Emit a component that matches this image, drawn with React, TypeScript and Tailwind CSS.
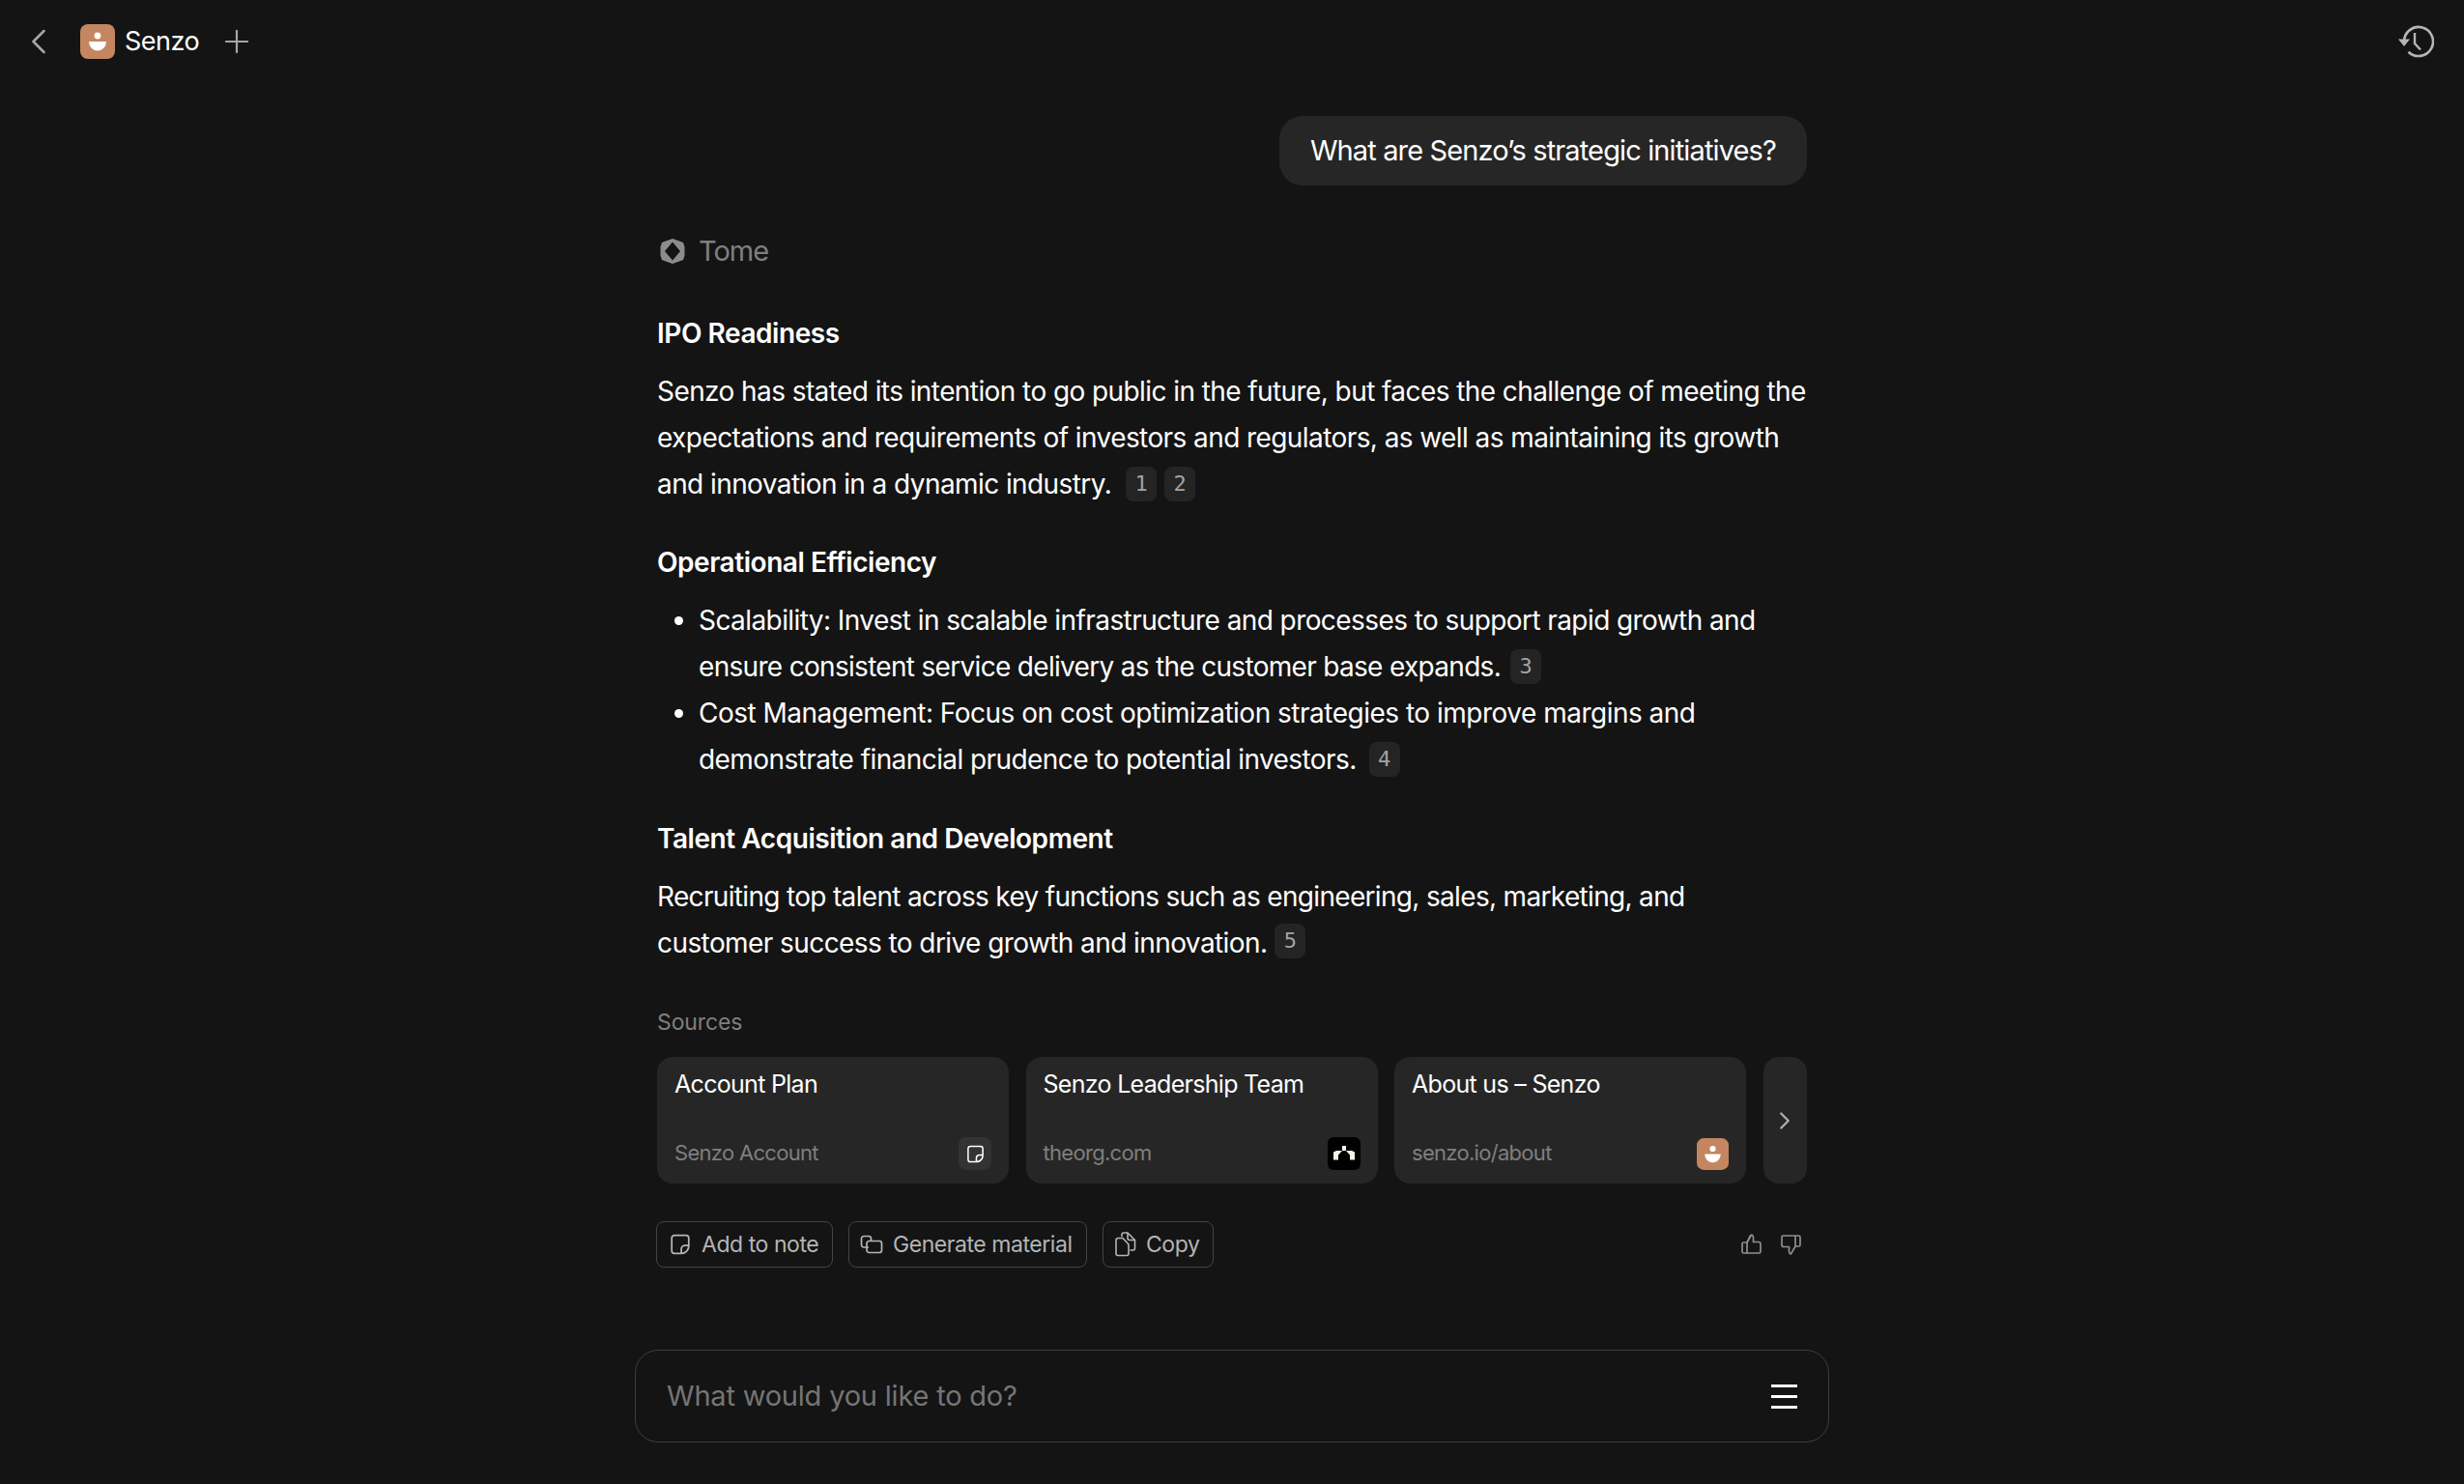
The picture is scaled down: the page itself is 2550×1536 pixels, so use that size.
import { ChevronLeft, ChevronRight, Plus } from 'lucide-react'

function SenzoLogo({ size }: { size: number }) {
  return (
    <svg width={size} height={size} viewBox="0 0 36 36" className="shrink-0">
      <rect width="36" height="36" rx="8" fill="#c38660" />
      <circle cx="18" cy="12" r="3.4" fill="#fff" />
      <path d="M9 18h18a9 9.6 0 0 1-18 0z" fill="#fff" />
    </svg>
  )
}

function NoteIcon({ size, className }: { size: number; className?: string }) {
  return (
    <svg width={size} height={size} viewBox="0 0 20 20" fill="none" stroke="currentColor" strokeWidth="1.6" className={className}>
      <path d="M4.5 1.5h11a2.5 2.5 0 0 1 2.5 2.5v7.5a7 7 0 0 1-7 7H4.5A2.5 2.5 0 0 1 2 16V4a2.5 2.5 0 0 1 2.5-2.5z" />
      <path d="M18 11h-3.5a3.5 3.5 0 0 0-3.5 3.5v4" />
    </svg>
  )
}

function GenerateIcon() {
  return (
    <svg width="24" height="20" viewBox="0 0 24 20" fill="none" stroke="currentColor" strokeWidth="1.7" className="shrink-0">
      <path d="M9 13H4a2.5 2.5 0 0 1-2.5-2.5V4A2.5 2.5 0 0 1 4 1.500h5A2.500 2.500 0 0 1 11.500 4v2" />
      <rect x="7" y="6.500" width="15.500" height="12" rx="2.500" />
    </svg>
  )
}

function CopyIcon() {
  return (
    <svg width="22" height="26" viewBox="0 0 22 26" fill="none" stroke="currentColor" strokeWidth="1.6" className="shrink-0">
      <path d="M7 5V3a2 2 0 0 1 2-2h4l7.500 7.500V17a2 2 0 0 1-2 2h-3" />
      <path d="M13 1v5.500a2 2 0 0 0 2 2h5.500" />
      <path d="M3 6.500h5l6 6.500v9.500a2 2 0 0 1-2 2H3a2 2 0 0 1-2-2v-14a2 2 0 0 1 2-2z" />
    </svg>
  )
}

function Chip({ n, className }: { n: number; className: string }) {
  return (
    <span
      className={`relative inline-flex h-[36px] w-[32px] items-center justify-center rounded-[8px] bg-[#242424] align-middle font-['DejaVu_Sans_Mono',monospace] text-[22px] leading-none tracking-normal text-[#a3a3a3] ${className}`}
    >
      {n}
    </span>
  )
}

function SourceCard({ title, sub, children }: { title: string; sub: string; children: React.ReactNode }) {
  return (
    <div className="flex h-[131px] w-[364px] shrink-0 flex-col justify-between rounded-[16px] bg-[#262626] pb-[14px] pl-[18px] pr-[18px] pt-[12px]">
      <div className="text-[25px] leading-[33px] tracking-[-0.7px] text-white">{title}</div>
      <div className="flex items-center justify-between">
        <span className="pb-[2px] text-[22px] leading-[31px] tracking-[-0.7px] text-[#7f7f7f]">{sub}</span>
        {children}
      </div>
    </div>
  )
}

function ActionButton({ label, icon, className }: { label: string; icon: React.ReactNode; className: string }) {
  return (
    <button className={`flex h-[48px] items-center rounded-[8px] border border-[#444444] text-[23px] tracking-[-0.45px] text-[#b5b5b5] ${className}`}>
      {icon}
      <span>{label}</span>
    </button>
  )
}

const heading = 'text-[28px] font-semibold leading-[48px] tracking-[-0.45px]'
const body = 'text-[28px] leading-[48px] tracking-[-0.58px]'

export default function App() {
  return (
    <div className="flex h-[1536px] w-[2550px] flex-col overflow-hidden bg-[#141414] font-['Inter',sans-serif] text-white">
      {/* Top bar */}
      <div className="flex h-[86px] items-center pl-[18px] pr-[31px]">
        <ChevronLeft size={44} strokeWidth={1.4} className="text-[#a6a6a6]" />
        <div className="ml-[21px]">
          <SenzoLogo size={36} />
        </div>
        <span className="ml-[10px] text-[27px] tracking-[-0.5px] text-white">Senzo</span>
        <Plus size={38} strokeWidth={1.4} className="ml-[20px] text-[#a6a6a6]" />
        <svg width="38" height="36" viewBox="0 0 38 36" fill="none" className="ml-auto text-[#b5b5b5]">
          <path d="M7 18a15 15 0 1 1 4.500 10.700" stroke="currentColor" strokeWidth="2.600" />
          <path d="M1 15.500h12L7 23z" fill="currentColor" />
          <path d="M18 9v11l6 6.500" stroke="currentColor" strokeWidth="2.400" />
        </svg>
      </div>

      {/* Conversation */}
      <div className="mx-auto w-[1190px] pt-[34px]">
        <div className="flex justify-end">
          <div className="rounded-[24px] bg-[#262626] px-[32px] py-[12px] text-[29px] leading-[48px] tracking-[-0.87px]">
            What are Senzo’s strategic initiatives?
          </div>
        </div>

        <div className="mt-[44px] flex h-[48px] items-center pl-[3px]">
          <svg width="26" height="26" viewBox="0 0 26 26" className="shrink-0">
            <path
              fillRule="evenodd"
              fill="#8c8c8c"
              d="M13 0l7 2.500 4 1.500 1.500 4.500 0 9-1.500 4.500-4 1.500-7 2.500-7-2.500-4-1.500-1.500-4.500 0-9 1.500-4.500 4-1.500zM13 3.500L5 13l8 9.500 8-9.500z"
            />
          </svg>
          <span className="ml-[14px] text-[29px] tracking-[-1px] text-[#7f7f7f]">Tome</span>
        </div>

        <div className={`mt-[37px] ${heading}`}>IPO Readiness</div>
        <p className={`mt-[12px] ${body}`}>
          Senzo has stated its intention to go public in the future, but faces the challenge of meeting the
          expectations and requirements of investors and regulators, as well as maintaining its growth and
          innovation in a dynamic industry.
          <Chip n={1} className="-top-[2px] ml-[15px]" />
          <Chip n={2} className="-top-[2px] ml-[8px]" />
        </p>

        <div className={`mt-[33px] ${heading}`}>Operational Efficiency</div>
        <ul className={`mt-[12px] list-disc pl-[43px] ${body}`}>
          <li>
            Scalability: Invest in scalable infrastructure and processes to support rapid growth and{' '}
            <span className="tracking-[-0.69px]">ensure consistent service delivery as the customer base expands.</span>
            <Chip n={3} className="-top-[2px] ml-[10px]" />
          </li>
          <li>
            <span className="tracking-[-0.5px]">Cost Management: Focus on cost optimization strategies to improve margins and</span>{' '}
            demonstrate financial prudence to potential investors.
            <Chip n={4} className="-top-[2px] ml-[13px]" />
          </li>
        </ul>

        <div className={`mt-[34px] ${heading}`}>Talent Acquisition and Development</div>
        <p className={`mt-[12px] ${body}`}>
          <span className="tracking-[-0.67px]">Recruiting top talent across key functions such as engineering, sales, marketing, and</span>{' '}
          customer success to drive growth and innovation.
          <Chip n={5} className="-top-[4px] ml-[8px]" />
        </p>

        {/* Sources */}
        <div className="mt-[40px] text-[23px] leading-[36px] tracking-[-0.1px] text-[#7f7f7f]">Sources</div>
        <div className="mt-[18px] flex gap-[17.5px]">
          <SourceCard title="Account Plan" sub="Senzo Account">
            <div className="flex h-[34px] w-[34px] items-center justify-center rounded-[8px] bg-[#333333] text-white">
              <NoteIcon size={19} />
            </div>
          </SourceCard>
          <SourceCard title="Senzo Leadership Team" sub="theorg.com">
            <svg width="34" height="34" viewBox="0 0 34 34" className="shrink-0">
              <rect width="34" height="34" rx="6" fill="#000" />
              <path d="M15 9h4v5h-4z M6 15.500l3-1.500h6l-4 4.500v5H6z M28 15.500l-3-1.500h-6l4 4.500v5h5z" fill="#f4f1e8" />
            </svg>
          </SourceCard>
          <SourceCard title="About us – Senzo" sub="senzo.io/about">
            <SenzoLogo size={33} />
          </SourceCard>
          <div className="flex h-[131px] flex-1 items-center justify-center rounded-[16px] bg-[#262626]">
            <ChevronRight size={30} strokeWidth={1.8} className="text-[#b0b0b0]" />
          </div>
        </div>

        {/* Actions */}
        <div className="-ml-px mt-[39px] flex items-center gap-[16px]">
          <ActionButton label="Add to note" icon={<NoteIcon size={22} className="shrink-0" />} className="w-[183px] gap-[11px] pl-[13px]" />
          <ActionButton label="Generate material" icon={<GenerateIcon />} className="w-[247px] gap-[10px] pl-[11px]" />
          <ActionButton label="Copy" icon={<CopyIcon />} className="w-[115px] gap-[10px] pl-[12px]" />
          <div className="ml-auto flex items-center gap-[18px] pr-[6px] text-[#8f8f8f]">
            <svg width="22" height="22" viewBox="0 0 22 22" fill="none" stroke="currentColor" strokeWidth="1.700" strokeLinejoin="round">
              <path d="M6 9h-3.500a1.500 1.500 0 0 0-1.500 1.500v8a1.500 1.500 0 0 0 1.500 1.500h16a1.500 1.500 0 0 0 1.500-1.500v-8a2 2 0 0 0-2-2h-5.500V3.500a2.500 2.500 0 0 0-2-2.300z" />
              <path d="M6 9L9.500 1.500M6 9v11" />
            </svg>
            <svg width="22" height="22" viewBox="0 0 22 22" fill="none" stroke="currentColor" strokeWidth="1.700" strokeLinejoin="round">
              <path d="M16 13h3.500a1.500 1.500 0 0 0 1.500-1.500v-8a1.500 1.500 0 0 0-1.500-1.500h-16A1.500 1.500 0 0 0 2 3.500v8a2 2 0 0 0 2 2h5.500v5a2.500 2.500 0 0 0 2 2.300z" />
              <path d="M16 13V2" />
            </svg>
          </div>
        </div>
      </div>

      {/* Prompt */}
      <div className="mx-auto mt-[85px] flex h-[96px] w-[1236px] items-center justify-between rounded-[24px] border border-[#3d3d3d] pl-[32px] pr-[32px]">
        <span className="text-[29px] tracking-[-0.2px] text-[#757575]">What would you like to do?</span>
        <div className="flex w-[27px] flex-col gap-[8px]">
          <div className="h-[3px] bg-white" />
          <div className="h-[3px] bg-white" />
          <div className="h-[3px] bg-white" />
        </div>
      </div>
    </div>
  )
}
